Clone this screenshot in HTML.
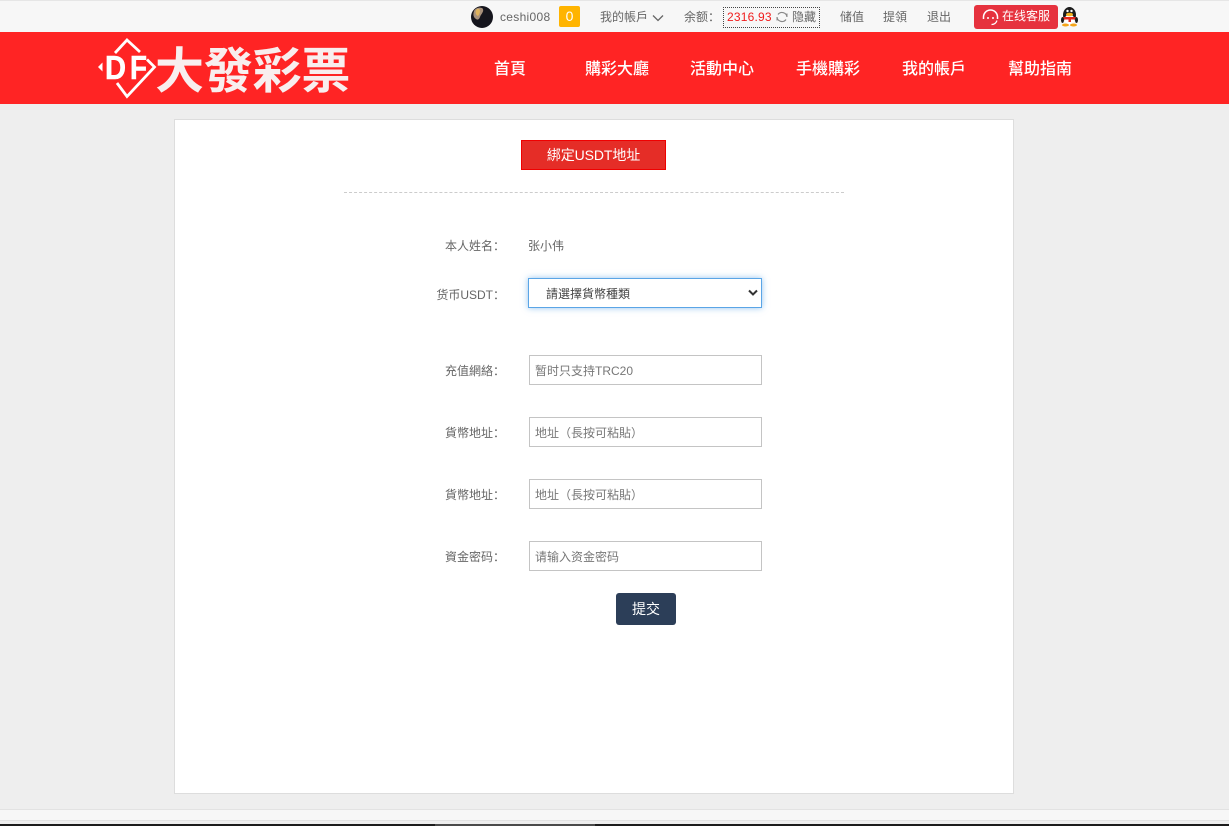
<!DOCTYPE html>
<html lang="zh"><head><meta charset="utf-8"><title>绑定USDT地址</title>
<style>
*{box-sizing:border-box;margin:0;padding:0}
html,body{width:1229px;height:826px;overflow:hidden;background:#eee;font-family:"Liberation Sans","Noto Sans CJK SC",sans-serif;font-size:12px;color:#666}
.a{position:absolute;white-space:nowrap}
.top{position:absolute;left:0;top:0;width:1229px;height:32px;background:#f7f7f7;border-top:1px solid #e6e6e6}
.head{position:absolute;left:0;top:32px;width:1229px;height:72px;background:#ff2424}
.nav{position:absolute;top:60px;color:#fff;font-size:16px;line-height:20px;white-space:nowrap;font-weight:500}
.card{position:absolute;left:174px;top:119px;width:840px;height:675px;background:#fff;border:1px solid #ddd}
.lab{position:absolute;width:120px;left:385px;text-align:right;line-height:18px;font-size:12px;color:#666}
.inp{position:absolute;left:529px;width:233px;height:30px;border:1px solid #c4c4c4;background:#fff;font-size:12px;line-height:30px;padding-left:5px;color:#777}
</style></head><body>
<div class="top"></div>
<svg class="a" style="left:471px;top:6px" width="22" height="22" viewBox="0 0 22 22"><circle cx="11" cy="11" r="11" fill="#15151d"/><path d="M3 5C5 1 11 1 12 3C13 6 10 8 9 11C8 14 6 14 5 13C2 11 2 8 3 5Z" fill="#a8917c"/><path d="M5 4C7 2 9 3 9 5C9 7 8 9 7 10C5 9 4 7 5 4Z" fill="#dfb35e"/></svg>
<div class="a" style="left:500px;top:9px;line-height:16px;font-size:12px;color:#666;letter-spacing:.3px">ceshi008</div>
<div class="a" style="left:559px;top:6px;width:21px;height:21px;background:#ffb400;border-radius:2px;color:#fff;font-size:14px;line-height:21px;text-align:center">0</div>
<div class="a" style="left:600px;top:9px;line-height:16px">我的帳戶</div>
<svg class="a" style="left:652px;top:14px" width="12" height="9" viewBox="0 0 12 9"><path d="M1 1.500L6 6.500L11 1.500" fill="none" stroke="#666" stroke-width="1.300"/></svg>
<div class="a" style="left:684px;top:9px;line-height:16px">余额：</div>
<div class="a" style="left:723px;top:7px;width:97px;height:21px;border:1px dotted #444"></div>
<div class="a" style="left:727px;top:9px;line-height:16px;color:#f01c1c;font-size:12px;letter-spacing:.2px">2316.93</div>
<svg class="a" style="left:776px;top:11px" width="12" height="12" viewBox="0 0 12 12"><path d="M2 3.500A5 5 0 0 1 11 6M10 8.500A5 5 0 0 1 1 6" fill="none" stroke="#888" stroke-width="1.200"/><path d="M11 6L11 2.500M1 6L1 9.500" stroke="#888" stroke-width="1"/></svg>
<div class="a" style="left:792px;top:9px;line-height:16px">隐藏</div>
<div class="a" style="left:840px;top:9px;line-height:16px">储值</div>
<div class="a" style="left:883px;top:9px;line-height:16px">提領</div>
<div class="a" style="left:927px;top:9px;line-height:16px">退出</div>
<div class="a" style="left:974px;top:5px;width:84px;height:24px;background:#e6323e;border-radius:3px"></div>
<svg class="a" style="left:981px;top:8px" width="19" height="19" viewBox="0 0 19 19"><path d="M2.500 11V9A7 7 0 0 1 16.500 9V11" fill="none" stroke="#fff" stroke-width="1.500"/><path d="M16 12.500C15 15.500 13 16.500 10.500 16.500" fill="none" stroke="#fff" stroke-width="1.200"/><circle cx="7" cy="10" r="1" fill="#fff"/><circle cx="12" cy="10" r="1" fill="#fff"/></svg>
<div class="a" style="left:1002px;top:8px;line-height:17px;color:#fff;font-size:12px">在线客服</div>
<svg class="a" style="left:1060px;top:6px" width="19" height="21" viewBox="0 0 19 21"><ellipse cx="9.500" cy="9" rx="6.500" ry="8" fill="#1c1c1c"/><ellipse cx="9.500" cy="13.500" rx="5" ry="5" fill="#fff"/><ellipse cx="9.500" cy="8.500" rx="3.500" ry="1.700" fill="#f5b21a"/><circle cx="7.500" cy="5" r="1.200" fill="#fff"/><circle cx="11.500" cy="5" r="1.200" fill="#fff"/><path d="M3 11H16L15.500 13.500H11V16H8.500V13.500H3.500Z" fill="#e3261c"/><ellipse cx="5.500" cy="19" rx="3.500" ry="1.500" fill="#f5a51a"/><ellipse cx="13.500" cy="19" rx="3.500" ry="1.500" fill="#f5a51a"/><ellipse cx="2.500" cy="14" rx="1.500" ry="3" fill="#1c1c1c"/><ellipse cx="16.500" cy="14" rx="1.500" ry="3" fill="#1c1c1c"/></svg>

<div class="head"></div>
<svg class="a" style="left:97px;top:37px" width="60" height="62" viewBox="0 0 60 62">
<path d="M18 16L30 3L43 15" fill="none" stroke="#fff" stroke-width="2.800"/>
<path d="M20 46L30 59.500L57.500 30L50 22.500" fill="none" stroke="#fff" stroke-width="2.800"/>
<path d="M1 30L5.500 25.500V34.500Z" fill="#fff"/>
<text x="8" y="42" textLength="21" lengthAdjust="spacingAndGlyphs" font-family="Liberation Sans,sans-serif" font-weight="700" font-size="33" fill="#fff" stroke="#fff" stroke-width=".6">D</text>
<text x="33" y="42" textLength="17" lengthAdjust="spacingAndGlyphs" font-family="Liberation Sans,sans-serif" font-weight="700" font-size="33" fill="#fff" stroke="#fff" stroke-width=".6">F</text>
</svg>
<div class="a" style="left:155px;top:35px;font-size:49px;line-height:66px;color:#f8eeee;font-weight:700;letter-spacing:-.2px;font-family:'Noto Sans CJK TC','Noto Sans CJK SC',sans-serif">大發彩票</div>
<div class="nav" style="left:494px">首頁</div>
<div class="nav" style="left:585px">購彩大廳</div>
<div class="nav" style="left:690px">活動中心</div>
<div class="nav" style="left:796px">手機購彩</div>
<div class="nav" style="left:902px">我的帳戶</div>
<div class="nav" style="left:1008px">幫助指南</div>

<div class="card"></div>
<div class="a" style="left:521px;top:140px;width:145px;height:30px;background:#e52d27;border:1px solid #f00000;color:#fff;font-size:14px;line-height:28px;text-align:center;letter-spacing:-.1px">綁定USDT地址</div>
<div class="a" style="left:344px;top:192px;width:500px;border-top:1px dashed #ccc"></div>

<div class="lab" style="top:237px">本人姓名：</div>
<div class="a" style="left:528px;top:237px;line-height:18px">张小伟</div>
<div class="lab" style="top:286px">货币USDT：</div>
<div class="a" style="left:528px;top:278px;width:234px;height:30px;border:1px solid #5aa5e6;box-shadow:0 0 6px rgba(90,165,230,.65);background:#fff;color:#444;line-height:30px;padding-left:17px">請選擇貨幣種類</div>
<svg class="a" style="left:748px;top:289px" width="10" height="8" viewBox="0 0 10 8"><path d="M1 1.500L5 5.500L9 1.500" fill="none" stroke="#333" stroke-width="2"/></svg>

<div class="lab" style="top:362px">充值網絡：</div>
<div class="inp" style="top:355px">暂时只支持TRC20</div>
<div class="lab" style="top:424px">貨幣地址：</div>
<div class="inp" style="top:417px">地址（長按可粘貼）</div>
<div class="lab" style="top:486px">貨幣地址：</div>
<div class="inp" style="top:479px">地址（長按可粘貼）</div>
<div class="lab" style="top:548px">資金密码：</div>
<div class="inp" style="top:541px">请输入资金密码</div>
<div class="a" style="left:616px;top:593px;width:60px;height:32px;background:#2c3e58;border-radius:3px;color:#fff;font-size:14px;line-height:32px;text-align:center">提交</div>

<div class="a" style="left:0;top:809px;width:1229px;height:12px;background:#f7f7f7;border-top:1px solid #e2e2e2;border-bottom:1px solid #e2e2e2"></div>
<div class="a" style="left:0;top:824px;width:1229px;height:2px;background:#1c1c1c"></div>
<div class="a" style="left:435px;top:824px;width:160px;height:2px;background:#4a4a4a"></div>
</body></html>
